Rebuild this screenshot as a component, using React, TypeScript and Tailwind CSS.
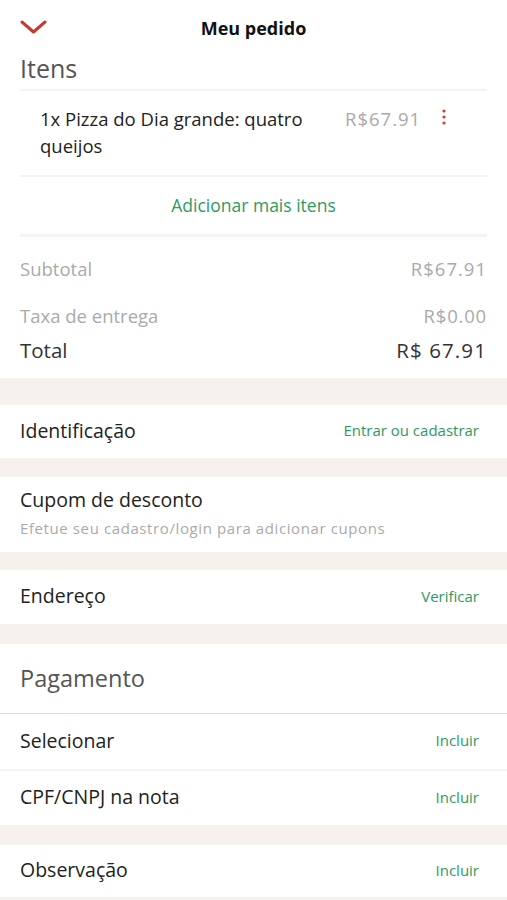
const font = { fontFamily: "'Open Sans', 'Noto Sans', sans-serif" };

function Gap({ h }: { h: string }) {
  return <div className={`bg-[#f7f1ed] ${h}`} />;
}

function ActionRow({
  label,
  action,
  height = "h-[54px]",
}: {
  label: string;
  action: string;
  height?: string;
}) {
  return (
    <div className={`flex items-center justify-between pl-5 pr-7 pb-[2px] bg-white ${height}`}>
      <span className="text-[19.5px] text-[#222]">{label}</span>
      <span className="text-[15px] text-[#2e9a62]">{action}</span>
    </div>
  );
}

export default function App() {
  return (
    <div className="w-[507px] h-[900px] bg-white overflow-hidden" style={font}>
      {/* header */}
      <div className="relative flex items-center justify-center h-[56px]">
        <svg
          className="absolute left-[20px] top-[20px]"
          width="27"
          height="14"
          viewBox="0 0 27 14"
          fill="none"
        >
          <path d="M2 2 L13.5 12 L25 2" stroke="#c63a2f" strokeWidth="3" strokeLinecap="round" strokeLinejoin="round" />
        </svg>
        <span className="text-[18px] font-bold text-[#111]">Meu pedido</span>
      </div>

      <div className="px-5 -mt-[3px]">
        <div className="text-[25px] text-[#555] leading-[30px] pb-[6px]">Itens</div>
        <div className="h-[2px] bg-[#f4f4f4]" />
        <div className="flex items-start pl-5 pt-[14px] pb-[14px] h-[84px]">
          <div className="w-[305px] text-[18.5px] text-[#222] leading-[27px]">
            1x Pizza do Dia grande: quatro queijos
          </div>
          <div className="flex-none text-[18.5px] tracking-[1px] text-[#aaa] leading-[27px]">R$67.91</div>
          <div className="w-[46px] flex justify-center pt-[4px]">
            <svg width="4" height="16" viewBox="0 0 4 16">
              <circle cx="2" cy="2" r="1.6" fill="#d2392f" />
              <circle cx="2" cy="8" r="1.6" fill="#d2392f" />
              <circle cx="2" cy="14" r="1.6" fill="#d2392f" />
            </svg>
          </div>
        </div>
        <div className="h-[2px] bg-[#f4f4f4]" />
        <div className="h-[57px] flex items-center justify-center text-[17.5px] text-[#2e9a62]">
          Adicionar mais itens
        </div>
        <div className="h-[3px] bg-[#f4f4f4]" />

        <div className="pt-[18px] pb-[13px]">
          <div className="flex justify-between text-[18.5px] text-[#aaa] leading-[28px]">
            <span>Subtotal</span>
            <span className="tracking-[1px]">R$67.91</span>
          </div>
          <div className="flex justify-between text-[18.5px] text-[#aaa] leading-[28px] mt-[19px]">
            <span>Taxa de entrega</span>
            <span className="tracking-[0.8px]">R$0.00</span>
          </div>
          <div className="flex justify-between text-[20.5px] text-[#333] leading-[30px] mt-[5px]">
            <span>Total</span>
            <span className="tracking-[1.1px]">R$ 67.91</span>
          </div>
        </div>
      </div>

      <Gap h="h-[27px]" />
      <ActionRow label="Identificação" action="Entrar ou cadastrar" height="h-[53px]" />
      <Gap h="h-[19px]" />
      <div className="h-[75px] pl-5 pt-[10px] bg-white">
        <div className="text-[19.5px] text-[#222] leading-[26px]">Cupom de desconto</div>
        <div className="text-[15px] tracking-[0.6px] text-[#aaa] leading-[24px] mt-[3px]">
          Efetue seu cadastro/login para adicionar cupons
        </div>
      </div>
      <Gap h="h-[18px]" />
      <ActionRow label="Endereço" action="Verificar" height="h-[54px]" />
      <Gap h="h-[20px]" />
      <div className="h-[70px] flex items-center pl-5 text-[23.5px] text-[#555] border-b border-[#dcdcdc]">
        Pagamento
      </div>
      <ActionRow label="Selecionar" action="Incluir" height="h-[55px]" />
      <div className="h-[2px] bg-[#f3f3f3]" />
      <ActionRow label="CPF/CNPJ na nota" action="Incluir" height="h-[54px]" />
      <Gap h="h-[20px]" />
      <ActionRow label="Observação" action="Incluir" height="h-[52px]" />
      <div className="h-[3px] bg-[#f5f3f0]" />
    </div>
  );
}
